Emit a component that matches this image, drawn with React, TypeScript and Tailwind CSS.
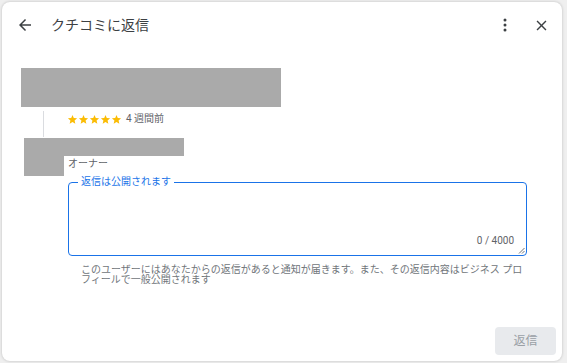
const font = "font-['Roboto','Noto_Sans_CJK_JP',sans-serif]";

function Star() {
  return (
    <svg width="11" height="11" viewBox="0 0 24 24" className="shrink-0">
      <path
        fill="#fbbc04"
        d="M12 17.27 18.18 21l-1.64-7.03L22 9.24l-7.19-.61L12 2 9.19 8.63 2 9.24l5.46 4.73L5.82 21z"
      />
    </svg>
  );
}

export default function App() {
  return (
    <div className={`min-h-[363px] w-[567px] bg-[#efefef] p-[2px] ${font}`}>
      <div className="flex h-[359px] w-[560px] flex-col rounded-lg bg-white shadow-[0_0_3px_rgba(0,0,0,0.22)]">
        {/* header */}
        <div className="flex h-[46px] items-center pl-[13px] pr-[12px]">
          <button className="flex h-5 w-5 items-center justify-center">
            <svg width="18" height="18" viewBox="0 0 24 24" fill="#3c4043">
              <path d="M20 11H7.83l5.59-5.59L12 4l-8 8 8 8 1.41-1.41L7.83 13H20v-2z" />
            </svg>
          </button>
          <h1 className="ml-4 text-[14px] leading-5 text-[#3c4043]">クチコミに返信</h1>
          <div className="ml-auto flex items-center gap-[18px]">
            <svg width="20" height="20" viewBox="0 0 24 24" fill="#3c4043">
              <circle cx="12" cy="6" r="1.8" />
              <circle cx="12" cy="12" r="1.8" />
              <circle cx="12" cy="18" r="1.8" />
            </svg>
            <svg width="17" height="17" viewBox="0 0 24 24" fill="#3c4043">
              <path d="M19 6.41 17.59 5 12 10.59 6.41 5 5 6.41 10.59 12 5 17.59 6.41 19 12 13.41 17.59 19 19 17.59 13.41 12z" />
            </svg>
          </div>
        </div>

        {/* review */}
        <div className="ml-[19px] mt-5 h-[39px] w-[260px] bg-[#aaaaaa]" />
        <div className="ml-[41px] mt-1 h-[26px] border-l border-[#dadce0] pl-[23px]">
          <div className="flex h-4 items-center">
            <div className="flex">
              <Star />
              <Star />
              <Star />
              <Star />
              <Star />
            </div>
            <span className="ml-[4px] text-[10px] leading-4 text-[#5f6368]">4&nbsp;週間前</span>
          </div>
        </div>

        {/* reply */}
        <div className="ml-[22px] mt-[1px] flex">
          <div className="h-[38px] w-10 bg-[#aaaaaa]" />
          <div className="flex flex-col">
            <div className="h-[18px] w-[120px] bg-[#aaaaaa]" />
            <div className="pl-1 text-[10px] leading-[16px] text-[#5f6368]">オーナー</div>
            <div className="relative ml-1 mt-[10px] flex h-[74px] w-[459px] items-end justify-end rounded border border-[#1a73e8] pb-[8px] pr-[12px]">
              <span className="absolute -top-[7px] left-[9px] bg-white px-[3px] text-[10px] leading-3 text-[#1a73e8]">
                返信は公開されます
              </span>
              <span className="text-[10px] leading-3 text-[#5f6368]">0 / 4000</span>
              <svg width="7" height="7" viewBox="0 0 7 7" className="absolute bottom-[1px] right-[1px]">
                <path d="M6.5 1 1 6.5M6.5 4 4 6.5" stroke="#5f6368" strokeWidth="0.9" />
              </svg>
            </div>
            <p className="ml-[17px] mt-[9px] w-[446px] text-[10px] leading-[10px] text-[#70757a]">
              このユーザーにはあなたからの返信があると通知が届きます。また、その返信内容はビジネス プロフィールで一般公開されます
            </p>
          </div>
        </div>

        {/* footer */}
        <div className="mt-auto flex justify-end pb-[6px] pr-[6px]">
          <button className="h-[28px] w-[61px] rounded bg-[#e8eaed] text-[12px] text-[#9aa0a6]">返信</button>
        </div>
      </div>
    </div>
  );
}
